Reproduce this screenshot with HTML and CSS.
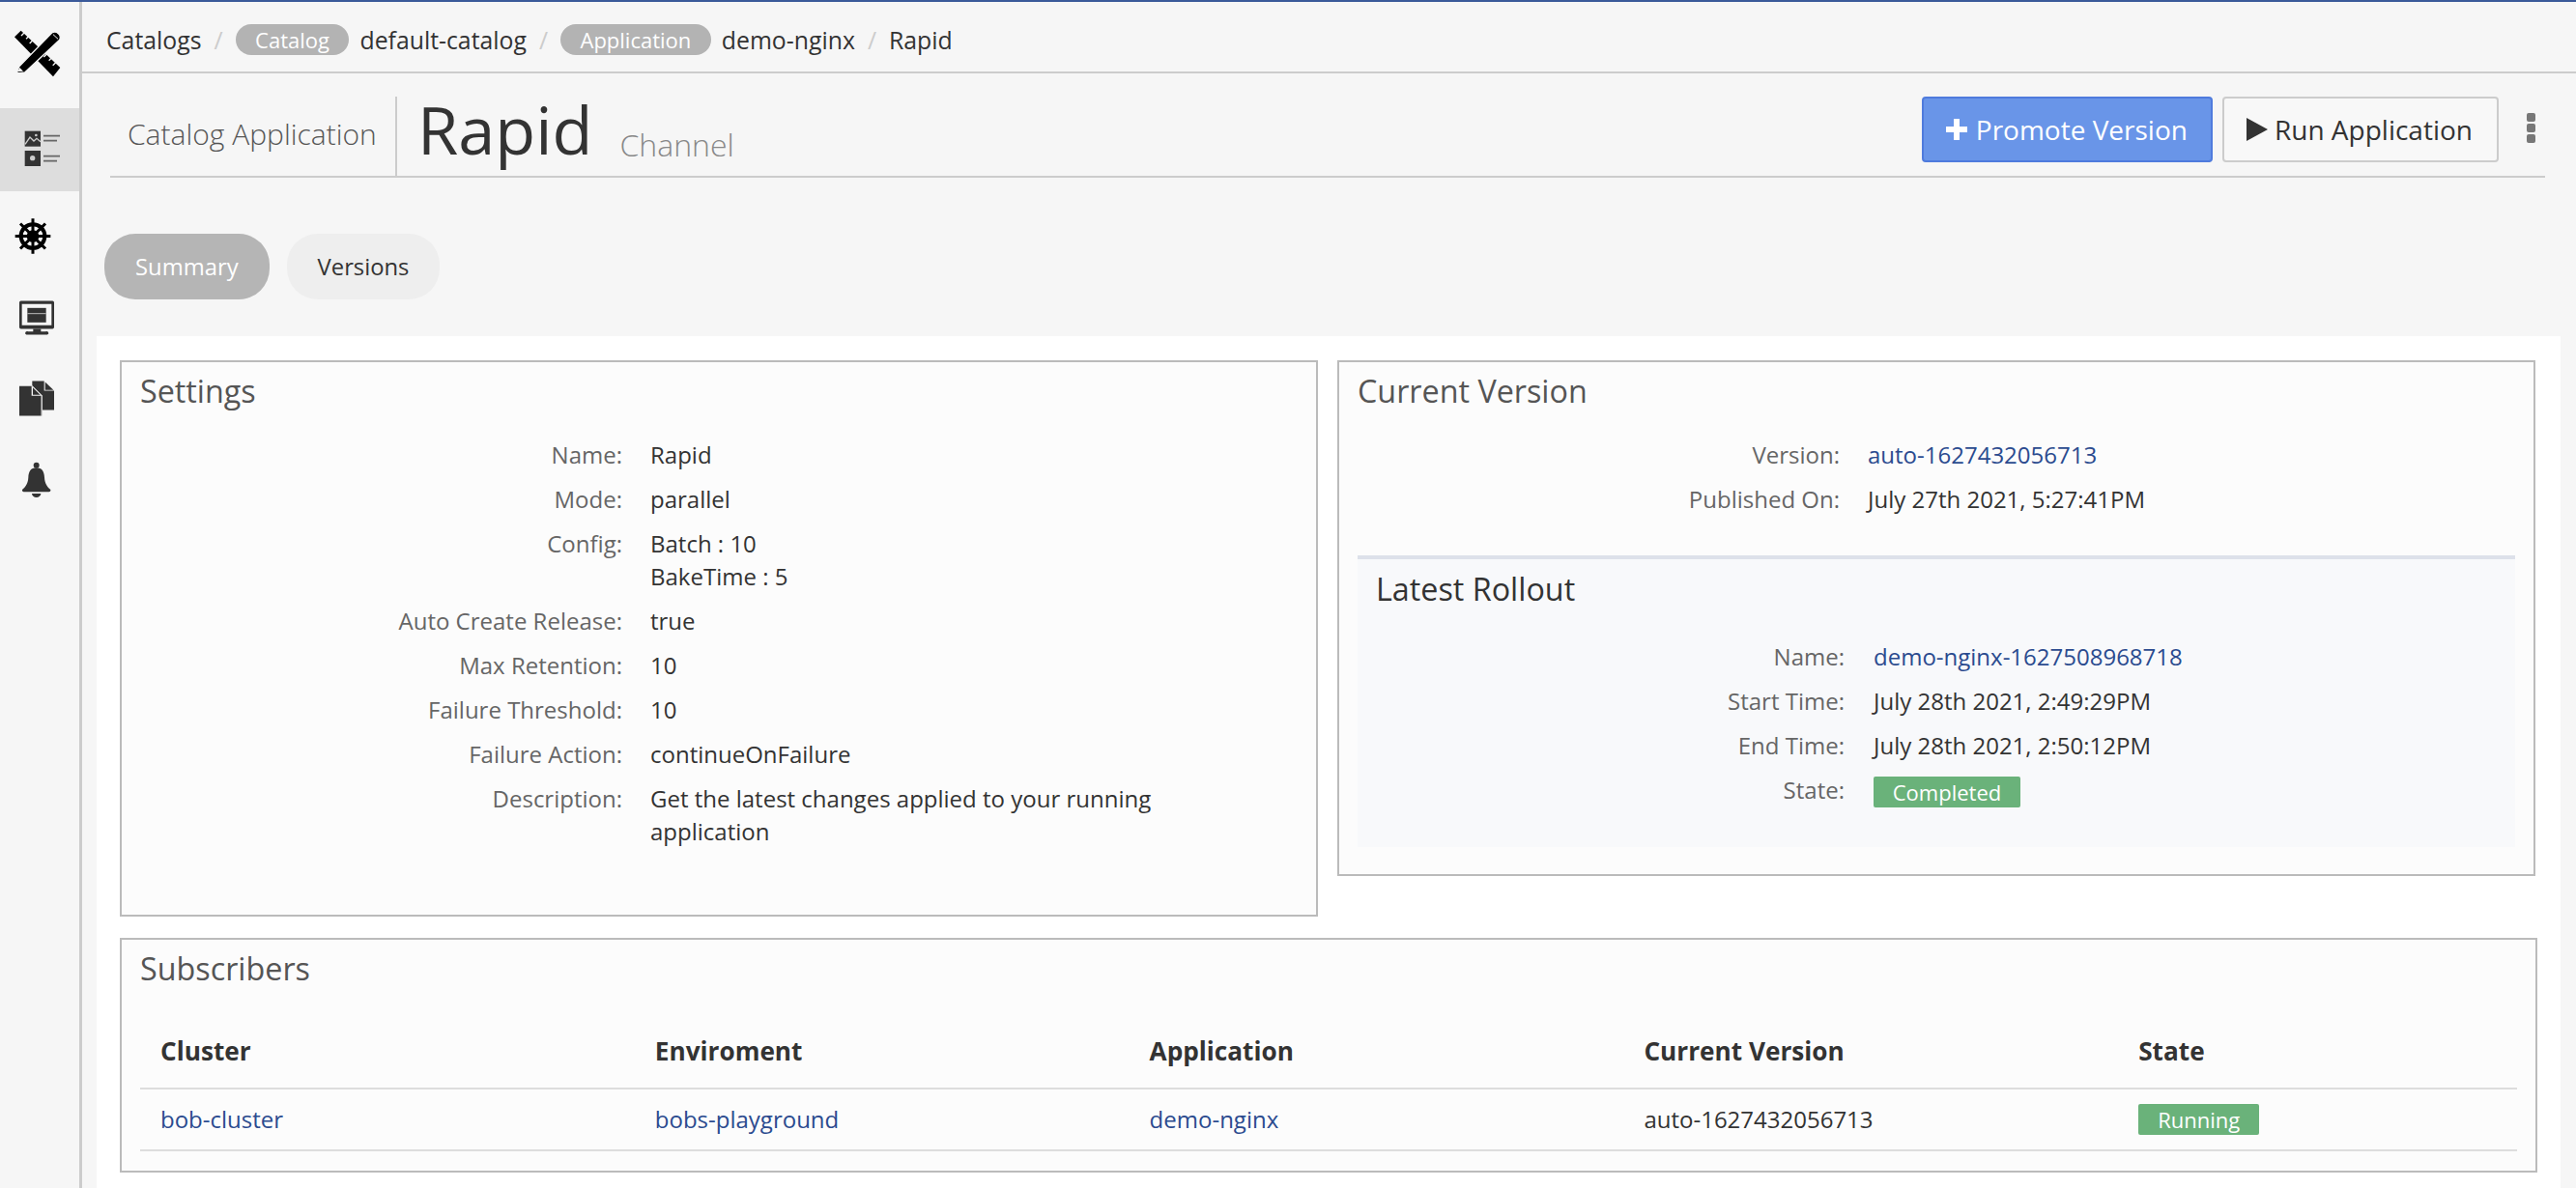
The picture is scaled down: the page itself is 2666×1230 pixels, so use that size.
FILE: index.html
```html
<!DOCTYPE html>
<html lang="en">
<head>
    <meta charset="UTF-8">
    <title>Rapid - Catalog Application</title>
    <link rel="stylesheet" href="styles.css">
</head>
<body>
    <div class="app">
        <nav class="sidebar">
            <div class="side-logo">
                <svg width="70" height="70" viewBox="3 6 210 210">
                    <path d="M30 55L50 35L172 150L150 178Z" fill="#000"/>
                    <path d="M60 42l-9 9M73 54l-7 7M86 66l-9 9M130 108l-9 9M144 121l-7 7M158 134l-9 9" stroke="#f6f6f6" stroke-width="4"/>
                    <path d="M37 168L44 147L146 42A17 17 0 0 1 170 64L62 165Z" fill="#000" stroke="#f6f6f6" stroke-width="4"/>
                    <path d="M40 163L46 150L57 161Z" fill="#f6f6f6"/>
                    <path d="M150 47L165 61" stroke="#f6f6f6" stroke-width="3"/>
                </svg>
            </div>
            <div class="side-item active">
                <svg width="70" height="70" viewBox="-12 0 210 210">
                    <rect x="47" y="47" width="49" height="48" fill="#333"/>
                    <path d="M48 88L63 66L75 78L84 70L96 80" fill="none" stroke="#ccc" stroke-width="4"/>
                    <circle cx="82" cy="60" r="4" fill="#ccc"/>
                    <rect x="47" y="108" width="49" height="48" fill="#333"/>
                    <circle cx="71" cy="131" r="8" fill="#ccc"/>
                    <path d="M105 62H156M105 77H147M105 125H156M105 140H147" stroke="#666" stroke-width="5"/>
                </svg>
            </div>
            <div class="side-item">
                <svg width="70" height="70" viewBox="3 -13.500 210 210">
                    <path d="M87 47V157M32 102H142M48 63L126 141M126 63L48 141" stroke="#000" stroke-width="9"/>
                    <circle cx="87" cy="102" r="37" fill="none" stroke="#000" stroke-width="12"/>
                    <circle cx="87" cy="102" r="19" fill="#000"/>
                </svg>
            </div>
            <div class="side-item">
                <svg width="70" height="70" viewBox="3 -13.500 210 210">
                    <path d="M50 48H148A5 5 0 0 1 153 53V130A5 5 0 0 1 148 135H50A5 5 0 0 1 45 130V53A5 5 0 0 1 50 48ZM53 58V124H145V58Z" fill="#333" fill-rule="evenodd"/>
                    <rect x="70" y="70" width="58" height="45" fill="#333"/>
                    <rect x="70" y="86" width="58" height="3" fill="#bbb"/>
                    <path d="M88 135H112V143H126A6 5 0 0 1 132 153H67A6 5 0 0 1 73 143H88Z" fill="#333"/>
                </svg>
            </div>
            <div class="side-item">
                <svg width="70" height="70" viewBox="3 -13.500 210 210">
                    <path d="M85 42H122V72H153V132H117V88L85 56Z" fill="#333"/>
                    <path d="M125 45L151 70H125Z" fill="#333"/>
                    <path d="M45 58H83V88H113V150H45Z" fill="#333"/>
                    <path d="M87 62L110 85H87Z" fill="#333"/>
                    <path d="M84 57L115 88V150" fill="none" stroke="#ccc" stroke-width="3"/>
                </svg>
            </div>
            <div class="side-item">
                <svg width="70" height="70" viewBox="3 0 210 210">
                    <circle cx="98" cy="62" r="9" fill="#333"/>
                    <path d="M98 70C80 70 74 82 73 100C72 118 66 128 54 138C53 142 56 145 62 145H134C140 145 143 142 142 138C130 128 124 118 123 100C122 82 116 70 98 70Z" fill="#333"/>
                    <path d="M84 150H112A14 12 0 0 1 84 150Z" fill="#333"/>
                </svg>
            </div>
        </nav>

        <main class="content">
            <div class="crumbs">
                <span>Catalogs</span><span class="sep">/</span>
                <span class="pill">Catalog</span><span class="crumb-name">default-catalog</span><span class="sep">/</span>
                <span class="pill">Application</span><span class="crumb-name">demo-nginx</span><span class="sep">/</span>
                <span>Rapid</span>
            </div>

            <div class="head-wrap">
                <div class="page-head">
                    <div class="kind">Catalog Application</div>
                    <h1>Rapid</h1>
                    <div class="sub">Channel</div>
                    <div class="actions">
                        <button class="btn btn-blue"><svg width="22" height="22" viewBox="0 0 22 22"><path d="M8 0h6v8h8v6h-8v8H8v-8H0V8h8z" fill="#fff"/></svg>Promote Version</button>
                        <button class="btn"><svg width="22" height="24" viewBox="0 0 22 24"><path d="M0 0l22 12L0 24z" fill="#333"/></svg>Run Application</button>
                    </div>
                </div>
                <div class="kebab"><i></i><i></i><i></i></div>
            </div>

            <div class="tabs">
                <a class="tab tab-on">Summary</a>
                <a class="tab">Versions</a>
            </div>

            <div class="sheet">
                <div class="two-col">
                    <section class="panel panel-settings">
                        <h3>Settings</h3>
                        <dl class="props">
                            <dt>Name:</dt><dd>Rapid</dd>
                            <dt>Mode:</dt><dd>parallel</dd>
                            <dt>Config:</dt><dd>Batch : 10<br>BakeTime : 5</dd>
                            <dt>Auto Create Release:</dt><dd>true</dd>
                            <dt>Max Retention:</dt><dd>10</dd>
                            <dt>Failure Threshold:</dt><dd>10</dd>
                            <dt>Failure Action:</dt><dd>continueOnFailure</dd>
                            <dt>Description:</dt><dd class="desc">Get the latest changes applied to your running application</dd>
                        </dl>
                    </section>
                    <section class="panel panel-version">
                        <h3>Current Version</h3>
                        <dl class="props">
                            <dt>Version:</dt><dd><a>auto-1627432056713</a></dd>
                            <dt>Published On:</dt><dd>July 27th 2021, 5:27:41PM</dd>
                        </dl>
                        <div class="rollout">
                            <h3>Latest Rollout</h3>
                            <dl class="props props-in">
                                <dt>Name:</dt><dd><a>demo-nginx-1627508968718</a></dd>
                                <dt>Start Time:</dt><dd>July 28th 2021, 2:49:29PM</dd>
                                <dt>End Time:</dt><dd>July 28th 2021, 2:50:12PM</dd>
                                <dt>State:</dt><dd><span class="badge badge-wide">Completed</span></dd>
                            </dl>
                        </div>
                    </section>
                </div>

                <section class="panel panel-subs">
                    <h3>Subscribers</h3>
                    <table class="subs">
                        <thead>
                            <tr><th>Cluster</th><th>Enviroment</th><th>Application</th><th>Current Version</th><th>State</th></tr>
                        </thead>
                        <tbody>
                            <tr>
                                <td><a>bob-cluster</a></td>
                                <td><a>bobs-playground</a></td>
                                <td><a>demo-nginx</a></td>
                                <td>auto-1627432056713</td>
                                <td><span class="badge">Running</span></td>
                            </tr>
                        </tbody>
                    </table>
                </section>
            </div>
        </main>
    </div>
</body>
</html>
```

FILE: styles.css
```css
* { box-sizing: border-box; }
html, body { margin: 0; padding: 0; }
body { font-family: "Open Sans", sans-serif; font-size: 24px; line-height: 34px; color: #333; background: #f6f6f6; height: 1230px; overflow: hidden; }
a { color: #2b4b8f; }
h1, h3, dl, dd { margin: 0; }

.app { display: flex; height: 1230px; border-top: 2px solid #3b5a9a; }

.sidebar { width: 85px; flex: none; border-right: 3px solid #ccc; }
.side-logo { height: 110px; display: flex; align-items: center; justify-content: center; }
.side-item { height: 85px; display: flex; align-items: center; justify-content: center; }
.side-item.active { background: #ddd; height: 86px; }

.content { flex: 1; min-width: 0; }

.crumbs { height: 74px; border-bottom: 2px solid #ccc; display: flex; align-items: center; padding: 5px 0 0 25px; font-size: 24.800px; }
.sep { color: #ccc; margin: 0 13px; }
.pill { background: #b3b3b3; color: #fff; border-radius: 16px; height: 32px; line-height: 32px; font-size: 22px; padding: 0 20.500px; }
.crumb-name { margin-left: 11px; }

.head-wrap { display: flex; padding: 24px 0 0 29px; }
.page-head { flex: none; width: 2520px; height: 84px; border-bottom: 2px solid #ccc; display: flex; align-items: flex-end; }
.kind { font-size: 30px; font-weight: 300; color: #555; width: 297px; height: 82px; padding: 22px 0 0 18px; border-right: 2px solid #ccc; white-space: nowrap; }
h1 { font-size: 68.500px; font-weight: 400; line-height: 82px; margin: 0 0 7px 21px; }
.sub { font-size: 32px; font-weight: 300; color: #888; margin-left: 28px; height: 66px; line-height: 68px; }
.actions { margin-left: auto; display: flex; gap: 10px; align-self: flex-start; margin-right: 48px; }
.btn { font-family: "Open Sans", sans-serif; font-size: 28px; height: 68px; padding: 0 25px 0 23px; color: #333; background: #f8f8f8; border: 2px solid #ccc; border-radius: 4px; white-space: nowrap; display: flex; align-items: center; gap: 7px; }
.btn-blue { background: #6995e8; border-color: #4f7bdd; color: #fff; padding-right: 24px; gap: 9px; }
.kebab { display: flex; flex-direction: column; gap: 2px; padding-top: 17px; margin-left: -19px; }
.kebab i { width: 9px; height: 9px; border-radius: 2px; background: #777; display: block; }

.tabs { display: flex; gap: 18px; padding: 58px 0 0 23px; }
.tab { height: 68px; border-radius: 32px; padding: 0 32px; display: flex; align-items: center; background: #eee; color: #333; font-size: 23.800px; }
.tab-on { background: #b5b5b5; color: #fff; }

.sheet { margin: 38px 16px 0 15px; background: #fff; padding: 25px 24px 0 24px; height: 882px; }
.two-col { display: flex; gap: 20px; align-items: flex-start; }

.panel { background: #fcfcfc; border: 2px solid #bbb; padding: 0 19px; }
.panel h3 { font-size: 32.300px; font-weight: 400; color: #555; line-height: 44px; padding-top: 7px; }
.panel-settings { width: 1240px; height: 576px; }
.panel-version { width: 1240px; height: 534px; }
.panel-subs { margin-top: 22px; height: 243px; }

.props { display: grid; grid-template-columns: 499px 1fr; column-gap: 29px; row-gap: 12px; margin-top: 28px; }
.props dt { text-align: right; color: #666; }
.desc { width: 560px; }
.rollout { background: #f8f9fb; border-top: 4px solid #dde1ea; margin-top: 41px; height: 302px; padding: 0 19px; }
.rollout h3 { color: #333; padding-top: 8px; }
.props-in { grid-template-columns: 485px 1fr; column-gap: 30px; margin-top: 32px; }

.badge { display: inline-block; background: #6ab27a; color: #fff; border-radius: 2px; font-size: 22px; line-height: 32px; height: 32px; padding: 0 20px; vertical-align: top; margin-top: 1px; }
.badge-wide { width: 152px; padding: 0; text-align: center; margin-top: 3px; }

.subs { width: 100%; table-layout: fixed; border-collapse: collapse; margin-top: 25px; }
.subs th { font-size: 26.200px; font-weight: 700; text-align: left; height: 78px; padding: 0 20px 0 21px; border-bottom: 2px solid #ddd; width: 511.800px; }
.subs th:last-child { width: auto; }
.subs td { height: 64px; padding: 0 20px 0 21px; border-bottom: 2px solid #ddd; }
```
